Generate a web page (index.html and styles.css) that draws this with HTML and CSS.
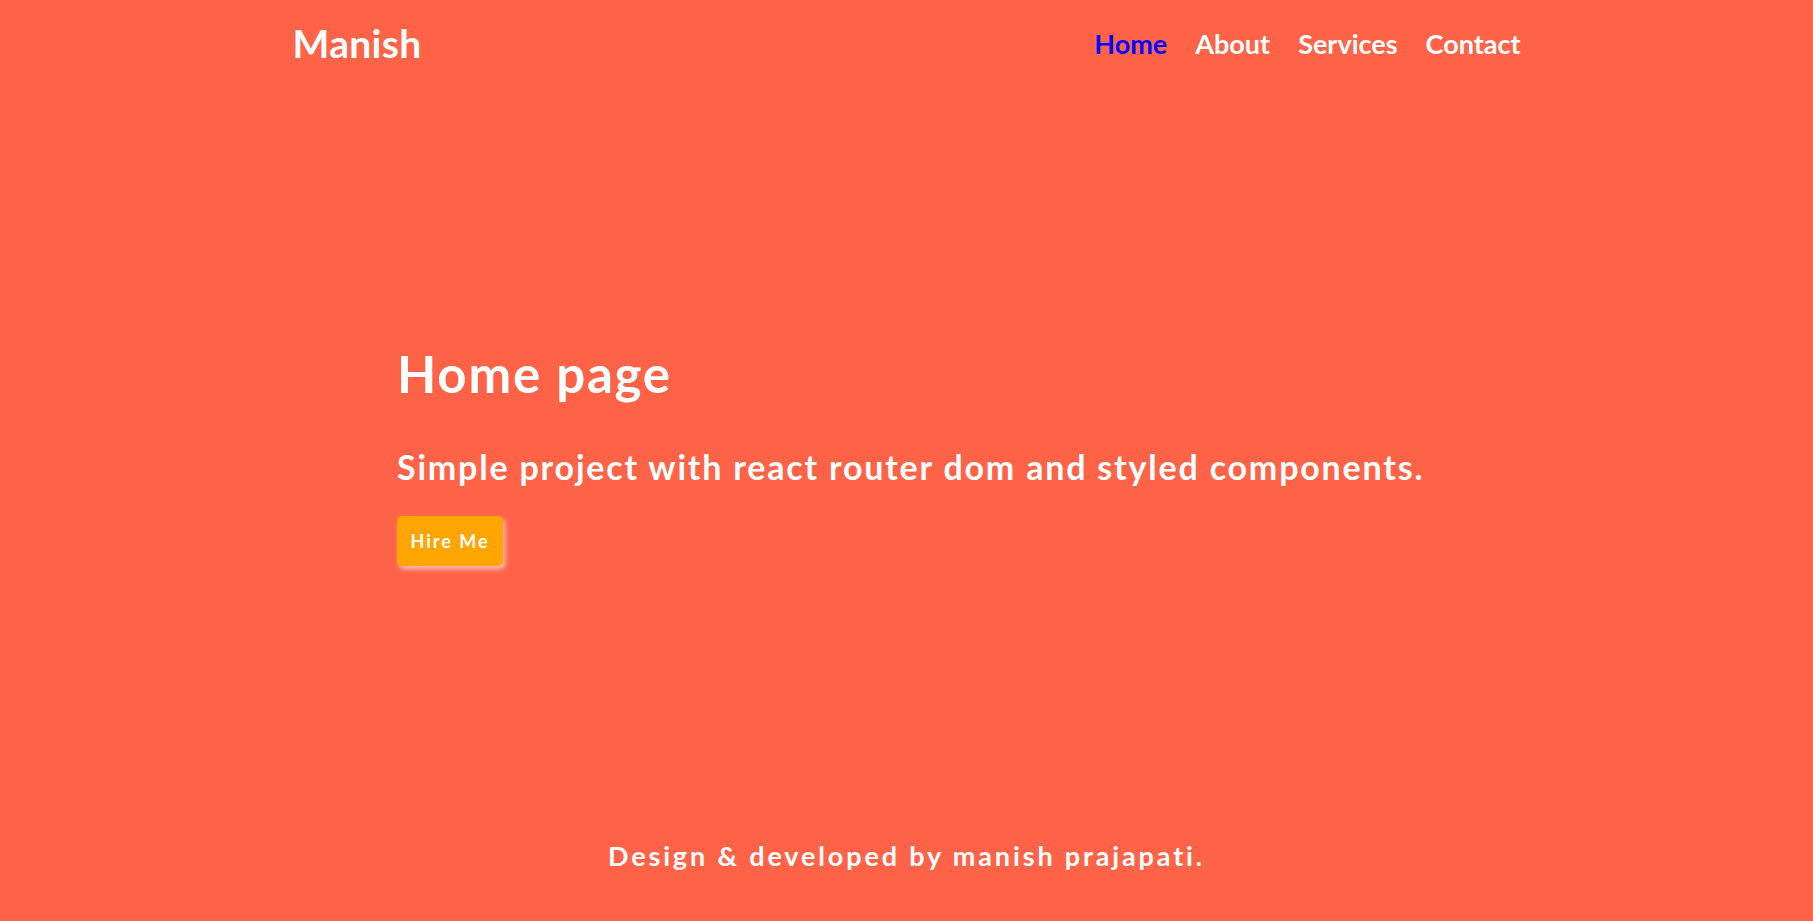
FILE: index.html
```html
<!DOCTYPE html>
<html lang="en">
<head>
<meta charset="utf-8">
<title>Manish</title>
<link rel="stylesheet" href="styles.css">
</head>
<body>
<div class="page">
  <header class="header">
    <a class="logo" href="#">Manish</a>
    <nav class="nav">
      <a class="nav-link active" href="#">Home</a>
      <a class="nav-link" href="#">About</a>
      <a class="nav-link" href="#">Services</a>
      <a class="nav-link" href="#">Contact</a>
    </nav>
  </header>
  <main class="hero">
    <div class="hero-inner">
      <h1 class="hero-title">Home page</h1>
      <p class="hero-sub">Simple project with react router dom and styled components.</p>
      <button class="hire-btn">Hire Me</button>
    </div>
  </main>
  <footer class="footer">
    <p class="footer-text">Design &amp; developed by manish prajapati.</p>
  </footer>
</div>
</body>
</html>
```
FILE: styles.css
```css
* { box-sizing: border-box; }
html, body { margin: 0; padding: 0; }
body {
  background: #ff6347;
  color: #fff;
  font-family: Lato, "Open Sans", sans-serif;
  font-weight: 700;
}
.page {
  min-height: 100vh;
  display: flex;
  flex-direction: column;
}
.header {
  width: 1228px;
  margin: 0 auto;
  height: 86px;
  display: flex;
  align-items: center;
  justify-content: space-between;
}
.logo {
  color: #fff;
  text-decoration: none;
  font-size: 39px;
  line-height: 1;
  letter-spacing: 0.3px;
}
.nav {
  display: flex;
  gap: 28px;
}
.nav-link {
  color: #fff;
  text-decoration: none;
  font-size: 27px;
  line-height: 1;
}
.nav-link.active { color: #0000ff; }
.hero {
  flex: 1;
  display: flex;
  flex-direction: column;
  justify-content: center;
}
.hero-inner {
  width: 1019px;
  margin: 0 auto;
}
.hero-title {
  margin: 0;
  font-size: 51px;
  line-height: 60px;
  letter-spacing: 1.8px;
}
.hero-sub {
  margin: 43px 0 28px;
  font-size: 34px;
  line-height: 1.2;
  letter-spacing: 1.8px;
  white-space: nowrap;
}
.hire-btn {
  display: block;
  background: #ffa500;
  color: #fff;
  border: none;
  border-radius: 5px;
  width: 106px;
  height: 50px;
  padding: 0;
  font-family: inherit;
  font-weight: 700;
  font-size: 18px;
  letter-spacing: 2px;
  box-shadow: 2px 3px 5px rgba(255, 205, 205, 0.9);
  cursor: pointer;
}
.footer {
  text-align: center;
  padding: 16px 0 49px;
}
.footer-text {
  margin: 0;
  font-size: 27px;
  line-height: 1.2;
  letter-spacing: 2.85px;
}
```
